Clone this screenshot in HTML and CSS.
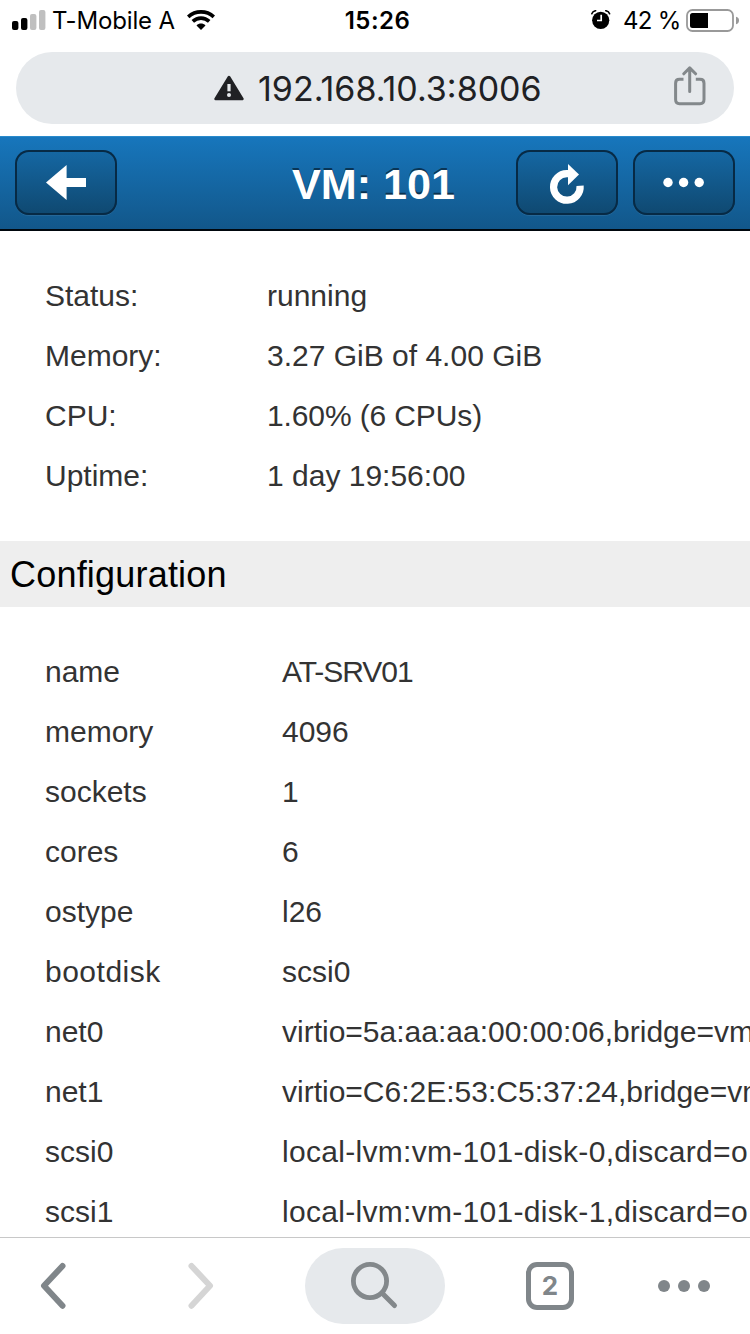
FILE: index.html
```html
<!DOCTYPE html>
<html lang="en">
<head>
<meta charset="utf-8">
<title>VM: 101</title>
<link rel="stylesheet" href="styles.css">
</head>
<body>
<div class="phone">
  <div class="statusbar">
    <div class="carrier">
      <svg class="signal" width="34" height="20" viewBox="0 0 34 20"><rect x="0" y="11" width="6.4" height="9" rx="2"/><rect x="9" y="8" width="6.4" height="12" rx="2"/><g fill="#bfbfbf"><rect x="18" y="4" width="6.4" height="16" rx="2"/><rect x="27" y="0" width="6.4" height="20" rx="2"/></g></svg>
      <span class="carrier-name">T-Mobile A</span>
      <svg class="wifi" width="28" height="20" viewBox="0 0 28 20"><g fill="none" stroke="#000" stroke-width="3.6"><path d="M1.2 6.8C8.5 .2 19.5 .2 26.8 6.8"/><path d="M5.8 11.4C10.5 7 17.5 7 22.2 11.4"/></g><path d="M9.5 15.4C12 13 16 13 18.5 15.4L14 20Z"/></svg>
    </div>
    <span class="clock">15:26</span>
    <div class="power">
      <svg class="alarm" width="20" height="20" viewBox="0 0 20 20"><circle cx="9.7" cy="10.3" r="8.6"/><path d="M10.2 4.7V10.5H6" fill="none" stroke="#fff" stroke-width="1.7"/><path d="M.8 3.7C1.4 2 2.8 1 4.6 .7M18.6 3.7C18 2 16.6 1 14.8 .7" fill="none" stroke="#000" stroke-width="1.6" stroke-linecap="round"/></svg>
      <span class="percent">42 %</span>
      <svg class="battery" width="53" height="24" viewBox="0 0 53 24"><rect x="1" y="1" width="46" height="21" rx="5.5" fill="none" stroke="#999" stroke-width="1.8"/><path d="M18 4V19H6.5Q4 19 4 16.5V6.5Q4 4 6.5 4H22V19H10Z"/><path d="M50 7.8Q53 8.5 53 11.5T50 15.3Z" fill="#999"/></svg>
    </div>
  </div>
  <div class="addressbar">
    <svg class="warning" width="30" height="26" viewBox="0 0 30 26"><path d="M15 2L28.4 24H1.6Z" stroke="#202124" stroke-width="2.6" stroke-linejoin="round" fill="#202124"/><path d="M13.4 9H16.6V16.3H13.4Z" fill="#e6e9ec"/><circle cx="15" cy="20" r="2" fill="#e6e9ec"/></svg>
    <span class="url">192.168.10.3:8006</span>
    <svg class="share" width="32" height="40" viewBox="0 0 32 40" fill="none" stroke="#83888b" stroke-width="3" stroke-linecap="round" stroke-linejoin="round"><path d="M9.5 13.3H5.5Q1.6 13.3 1.6 17.2V33.6Q1.6 37.7 5.5 37.7H26Q30 37.7 30 33.6V17.2Q30 13.3 26 13.3H21.8" stroke-linecap="butt"/><path d="M15.7 25.5V2M9.8 7.8L15.7 1.9L21.6 7.8"/></svg>
  </div>
  <div class="titlebar">
    <div class="button"><svg width="102" height="65" viewBox="0 0 102 65"><path d="M31 32.5L51.6 15V28H71V37H51.6V50Z" fill="#fff"/></svg></div>
    <div class="title">VM: 101</div>
    <div class="button"><svg width="102" height="65" viewBox="0 0 102 65"><path d="M64.1 35.7A13.3 13.3 0 1 1 50.8 23.6H53" fill="none" stroke="#fff" stroke-width="7.2"/><path d="M52 14L63 24.4L52 35.2Z" fill="#fff"/></svg></div>
    <div class="button"><svg width="102" height="65" viewBox="0 0 102 65" fill="#fff"><circle cx="35" cy="32.5" r="4.7"/><circle cx="50.6" cy="32.5" r="4.7"/><circle cx="66.2" cy="32.5" r="4.7"/></svg></div>
  </div>
  <div class="content">
    <div class="summary">
      <span>Status:</span><span>running</span>
      <span>Memory:</span><span>3.27 GiB of 4.00 GiB</span>
      <span>CPU:</span><span class="cpu">1.60% (6 CPUs)</span>
      <span>Uptime:</span><span>1 day 19:56:00</span>
    </div>
    <div class="section">Configuration</div>
    <div class="config">
      <span>name</span><span class="server">AT-SRV01</span>
      <span>memory</span><span>4096</span>
      <span>sockets</span><span>1</span>
      <span>cores</span><span>6</span>
      <span>ostype</span><span>l26</span>
      <span class="bootdisk">bootdisk</span><span>scsi0</span>
      <span>net0</span><span>virtio=5a:aa:aa:00:00:06,bridge=vm</span>
      <span>net1</span><span>virtio=C6:2E:53:C5:37:24,bridge=vm</span>
      <span>scsi0</span><span class="disk">local-lvm:vm-101-disk-0,discard=o</span>
      <span>scsi1</span><span class="disk">local-lvm:vm-101-disk-1,discard=o</span>
    </div>
  </div>
  <div class="toolbar">
    <div class="tool"><svg width="30" height="50" viewBox="0 0 30 50"><path d="M24.5 5L6 24.8L24.5 44.8" class="chevron"/></svg></div>
    <div class="tool"><svg width="30" height="50" viewBox="0 0 30 50"><path d="M5.5 5L24 24.8L5.5 44.8" class="chevron disabled"/></svg></div>
    <div class="search"><svg width="50" height="50" viewBox="0 0 50 50" fill="none" stroke="#83888b" stroke-linecap="round"><circle cx="20" cy="20" r="16.6" stroke-width="4.8"/><path d="M32 32L44.5 44.5" stroke-width="5"/></svg></div>
    <div class="tool"><div class="tabs">2</div></div>
    <div class="tool"><svg class="more" width="52" height="12" viewBox="0 0 52 12" fill="#80868a"><circle cx="6" cy="6" r="6"/><circle cx="26" cy="6" r="6"/><circle cx="46" cy="6" r="6"/></svg></div>
  </div>
</div>
</body>
</html>
```
FILE: styles.css
```css
* { box-sizing: border-box; }
body { margin: 0; background: #fff; }
svg { display: block; flex: none; }
.phone {
  width: 750px;
  height: 1334px;
  display: flex;
  flex-direction: column;
  overflow: hidden;
  font-family: "Liberation Sans", Arial, sans-serif;
}
.statusbar {
  height: 40px;
  flex: none;
  display: grid;
  grid-template-columns: 1fr auto 1fr;
  align-items: center;
  padding: 0 11px 0 12px;
  font: 24px/38px Inter, sans-serif;
}
.carrier, .power { display: flex; align-items: center; }
.power { justify-content: flex-end; }
.carrier-name { margin-left: 6px; padding-top: 2px; width: 123px; white-space: nowrap; letter-spacing: -.15px; }
.wifi { margin-left: 12px; }
.clock { font-weight: 600; letter-spacing: .5px; padding: 2px 0 0 4px; }
.alarm { margin-right: 12px; }
.percent { width: 57px; padding-top: 2px; white-space: nowrap; letter-spacing: -.7px; }
.battery { margin-left: 6px; margin-top: 1px; }
.addressbar {
  height: 72px;
  flex: none;
  margin: 12px 16px;
  border-radius: 36px;
  background: #e6e9ec;
  display: flex;
  align-items: center;
  padding: 0 28px 0 198px;
}
.url {
  flex: 1;
  margin-left: 14px;
  padding-top: 1px;
  font: 34px/72px Inter, sans-serif;
  color: #202124;
  white-space: nowrap;
}
.share { margin-bottom: 4px; }
.titlebar {
  height: 95px;
  flex: none;
  display: flex;
  align-items: flex-start;
  gap: 15px;
  padding: 13px 15px 0;
  border-top: 1px solid #298acb;
  border-bottom: 2px solid #00070d;
  background: linear-gradient(#1776bc, #12578a);
}
.button {
  width: 102px;
  height: 65px;
  flex: none;
  border-radius: 14px;
  background: linear-gradient(#1568a4, #0f4870);
  box-shadow: inset 0 0 0 2px #072a45, 0 1px 0 rgba(255, 255, 255, .08);
}
.title {
  flex: 1;
  padding-left: 114px;
  text-align: center;
  font-size: 43.2px;
  font-weight: bold;
  line-height: 68px;
  color: #fff;
  text-shadow: 0 -2px 0 rgba(0, 0, 0, .5);
  white-space: nowrap;
}
.content { flex: 1; min-height: 0; overflow: hidden; padding-top: 35px; }
.summary, .config {
  display: grid;
  grid-auto-rows: 60px;
  padding-left: 45px;
  font-size: 30px;
  line-height: 60px;
  color: #333;
  white-space: nowrap;
}
.summary { grid-template-columns: 222px 1fr; padding-bottom: 35px; }
.config { grid-template-columns: 237px 1fr; padding-top: 35px; }
.cpu { letter-spacing: -.12px; }
.server { letter-spacing: -1.05px; }
.bootdisk { letter-spacing: .5px; }
.disk { letter-spacing: .3px; }
.section {
  height: 66px;
  padding-left: 10px;
  background: #eee;
  color: #000;
  font-size: 36px;
  line-height: 67px;
  letter-spacing: .2px;
}
.toolbar {
  height: 97px;
  flex: none;
  border-top: 1px solid #c8c8c8;
  display: grid;
  grid-template-columns: 105px 192px 156px 194px 73px;
  align-items: center;
  justify-items: center;
}
.tool { display: flex; }
.chevron { fill: none; stroke: #80868a; stroke-width: 6; stroke-linecap: round; stroke-linejoin: round; }
.disabled { stroke: #d5d5d5; }
.search {
  width: 140px;
  height: 76px;
  border-radius: 38px;
  background: #e6e9ec;
  display: flex;
  align-items: center;
  justify-content: center;
}
.tabs {
  width: 48px;
  height: 48px;
  border: 5px solid #80868a;
  border-radius: 11px;
  color: #80868a;
  font: bold 26px/38px Inter, sans-serif;
  text-align: center;
}
```
